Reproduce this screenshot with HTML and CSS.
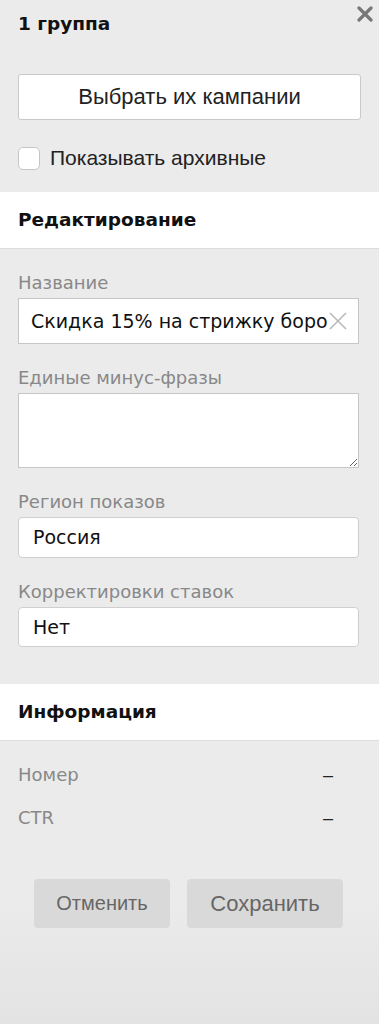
FILE: index.html
```html
<!DOCTYPE html>
<html>
  <head>
    <meta name="viewport" content="width=device-width, initial-scale=1">
    <link rel="stylesheet" href="styles.css">
  </head>
  <body>
    <div class="panel">
      <div class="top">
        <h2 class="group-title">1 группа</h2>
        <button class="close-btn" title="Закрыть">
          <svg width="16" height="16" viewBox="0 0 16 16"><path d="M2 2 L14 14 M14 2 L2 14" stroke="#777" stroke-width="3.2" stroke-linecap="round"/></svg>
        </button>
        <button class="choose-btn">Выбрать их кампании</button>
        <label class="check-row">
          <input type="checkbox" class="check">
          <span>Показывать архивные</span>
        </label>
      </div>

      <div class="section-head">Редактирование</div>

      <div class="form">
        <div class="field">
          <div class="field-label">Название</div>
          <div class="input-wrap">
            <input type="text" class="text-input name-input" value="Скидка 15% на стрижку бороды и усов">
            <span class="clear-x">
              <svg width="18" height="18" viewBox="0 0 18 18"><path d="M1 1 L17 17 M17 1 L1 17" stroke="#b9b9b9" stroke-width="1.6"/></svg>
            </span>
          </div>
        </div>
        <div class="field">
          <div class="field-label">Единые минус-фразы</div>
          <textarea class="phrases"></textarea>
        </div>
        <div class="field">
          <div class="field-label">Регион показов</div>
          <div class="select-box">Россия</div>
        </div>
        <div class="field">
          <div class="field-label">Корректировки ставок</div>
          <div class="select-box select-short">Нет</div>
        </div>
      </div>

      <div class="section-head">Информация</div>

      <div class="info">
        <div class="info-row"><span>Номер</span><span class="dash">–</span></div>
        <div class="info-row"><span>CTR</span><span class="dash">–</span></div>
      </div>

      <div class="actions">
        <button class="act-btn cancel">Отменить</button>
        <button class="act-btn save">Сохранить</button>
      </div>
    </div>
  </body>
</html>
```

FILE: styles.css
```css
body {
  margin: 0;
  background: #ebebeb;
  font-family: "DejaVu Sans", Verdana, sans-serif;
}

.panel {
  width: 379px;
  min-height: 1024px;
  background: linear-gradient(to bottom, #ebebeb 0, #ebebeb 900px, #e3e3e3 1024px);
}

/* Top block */
.top {
  position: relative;
  padding: 14px 18px 22px;
}

.group-title {
  margin: 0;
  font-size: 18.5px;
  line-height: 20px;
  font-weight: bold;
  color: #111;
}

.close-btn {
  position: absolute;
  top: 6px;
  right: 6px;
  border: none;
  background: none;
  padding: 0;
  width: 16px;
  height: 16px;
  cursor: pointer;
}

.choose-btn {
  display: block;
  width: 100%;
  height: 46px;
  margin-top: 40px;
  background: #fff;
  border: 1px solid #c9c9c9;
  border-radius: 3px;
  font-family: "Liberation Sans", Arial, sans-serif;
  font-size: 22px;
  color: #222;
}

.check-row {
  display: flex;
  align-items: center;
  gap: 10px;
  margin-top: 26px;
  font-family: "Liberation Sans", Arial, sans-serif;
  font-size: 21px;
  color: #222;
}

.check {
  -webkit-appearance: none;
  appearance: none;
  margin: 0;
  width: 22px;
  height: 23px;
  background: #fff;
  border: 1px solid #c6c6c6;
  border-radius: 5px;
}

/* Section headers */
.section-head {
  height: 56px;
  line-height: 56px;
  padding: 0 18px;
  background: #fff;
  border-bottom: 1px solid #dcdcdc;
  font-size: 18.5px;
  font-weight: bold;
  color: #111;
}

/* Form */
.form {
  padding: 24px 18px 13px;
}

.field {
  margin-bottom: 24px;
}

.field-label {
  font-size: 18px;
  line-height: 20px;
  color: #888;
  margin-bottom: 5px;
}

.input-wrap {
  position: relative;
}

.text-input {
  box-sizing: border-box;
  width: 341px;
  height: 46px;
  padding: 0 30px 0 12px;
  border: 1px solid #c6c6c6;
  background: #fff;
  font-family: "DejaVu Sans", Verdana, sans-serif;
  font-size: 19px;
  color: #111;
  outline: none;
}

.clear-x {
  position: absolute;
  top: 14px;
  right: 14px;
  width: 18px;
  height: 18px;
}

.phrases {
  display: block;
  box-sizing: border-box;
  width: 341px;
  height: 75px;
  border: 1px solid #c6c6c6;
  background: #fff;
  border-radius: 0;
  margin: 0;
}

.select-box {
  box-sizing: border-box;
  width: 341px;
  height: 41px;
  line-height: 39px;
  padding: 0 14px;
  background: #fff;
  border: 1px solid #cfcfcf;
  border-radius: 4px;
  font-size: 19px;
  color: #111;
}

.select-short {
  height: 40px;
  line-height: 38px;
}

/* Info */
.info {
  padding: 24px 46px 0 18px;
}

.info-row {
  display: flex;
  justify-content: space-between;
  height: 43px;
  line-height: 20px;
  font-size: 18px;
  color: #888;
}

.dash {
  font-family: "Liberation Sans", Arial, sans-serif;
  color: #222;
}

/* Actions */
.actions {
  display: flex;
  justify-content: center;
  gap: 17px;
  padding: 28px 2px 0 0;
}

.act-btn {
  height: 49px;
  border: none;
  border-radius: 4px;
  background: #d9d9d9;
  color: #666;
  font-family: "Liberation Sans", Arial, sans-serif;
}

.cancel {
  width: 136px;
  font-size: 20px;
}

.save {
  width: 156px;
  font-size: 22px;
}
```
